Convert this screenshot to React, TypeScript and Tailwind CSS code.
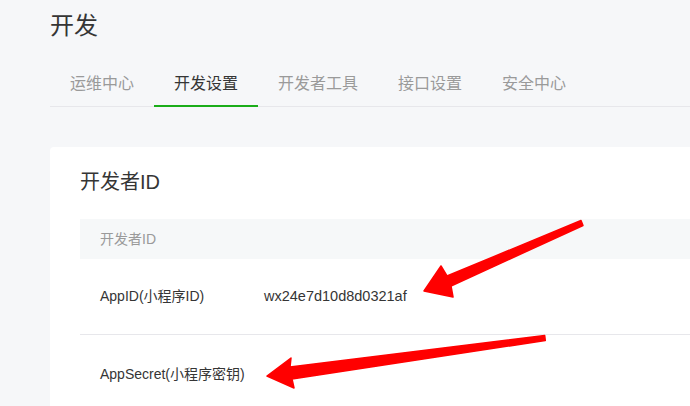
import React from "react";

const FONT = '"Liberation Sans", "Noto Sans CJK SC", sans-serif';

const tabs = ["运维中心", "开发设置", "开发者工具", "接口设置", "安全中心"];

export default function App() {
  return (
    <div
      className="relative w-[690px] h-[406px] overflow-hidden bg-[#f6f7f9] pl-[50px]"
      style={{ fontFamily: FONT }}
    >
      <div className="pt-[10px] h-[42px] text-[24px] leading-[32px] text-[#353535]">开发</div>

      <div className="mt-[21px] flex border-b border-[#e7e7eb]">
        {tabs.map((t, i) => (
          <div
            key={t}
            className={
              "h-[44px] px-[20px] -mb-px flex items-center text-[16px] leading-[20px] border-b-2 " +
              (i === 1
                ? "border-[#1aad19] text-[#353535]"
                : "border-transparent text-[#9a9a9a]")
            }
          >
            {t}
          </div>
        ))}
      </div>

      <div className="mt-[40px] bg-white rounded-tl-[4px] pl-[30px] pt-[21px] h-[300px]">
        <div className="text-[20px] leading-[28px] text-[#353535]">开发者ID</div>
        <div className="mt-[23px]">
          <div className="h-[40px] bg-[#f6f8f9] flex items-center pl-[20px] text-[14px] text-[#9a9a9a]">
            开发者ID
          </div>
          <div className="h-[76px] flex items-center pl-[20px] border-b border-[#e7e7eb] text-[14px] text-[#353535]">
            <div className="w-[164px]">AppID(小程序ID)</div>
            <div className="text-[14.5px]">wx24e7d10d8d0321af</div>
          </div>
          <div className="h-[78px] flex items-center pl-[20px] text-[14px] text-[#353535]">
            <div className="w-[164px]">AppSecret(小程序密钥)</div>
          </div>
        </div>
      </div>

      <svg
        className="absolute left-0 top-0 pointer-events-none"
        width="690"
        height="406"
        viewBox="0 0 690 406"
      >
        <polygon
          points="424,291 453,297 451,286 583,225.5 581,220.5 447,276 441,266"
          fill="#ff0000"
          stroke="#ff0000"
          strokeWidth="1.5"
          strokeLinejoin="round"
        />
        <polygon
          points="267,376 294,388 292,379 545.3,340.5 544.7,335.5 290,367 291,358"
          fill="#ff0000"
          stroke="#ff0000"
          strokeWidth="1.5"
          strokeLinejoin="round"
        />
      </svg>
    </div>
  );
}
